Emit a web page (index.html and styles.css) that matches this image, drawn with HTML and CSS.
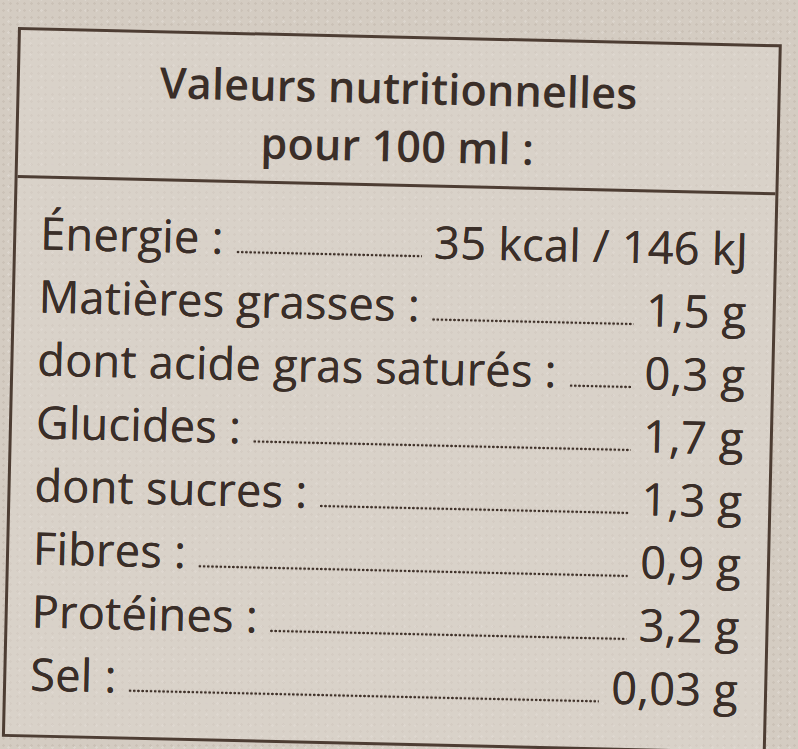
FILE: index.html
```html
<!DOCTYPE html>
<html lang="fr">
<head>
<meta charset="utf-8">
<title>Valeurs nutritionnelles</title>
<link rel="stylesheet" href="styles.css">
</head>
<body>
<div class="sheet">
  <section class="label">
    <header class="label-head">
      <div class="head-line">Valeurs nutritionnelles</div>
      <div class="head-line">pour 100 ml :</div>
    </header>
    <div class="label-body">
      <div class="row"><span class="name">Énergie :</span><span class="leader"></span><span class="val">35 kcal / 146 kJ</span></div>
      <div class="row"><span class="name">Matières grasses :</span><span class="leader"></span><span class="val">1,5 g</span></div>
      <div class="row"><span class="name">dont acide gras saturés :</span><span class="leader"></span><span class="val">0,3 g</span></div>
      <div class="row"><span class="name">Glucides :</span><span class="leader"></span><span class="val">1,7 g</span></div>
      <div class="row"><span class="name">dont sucres :</span><span class="leader"></span><span class="val">1,3 g</span></div>
      <div class="row"><span class="name">Fibres :</span><span class="leader"></span><span class="val">0,9 g</span></div>
      <div class="row"><span class="name">Protéines :</span><span class="leader"></span><span class="val">3,2 g</span></div>
      <div class="row"><span class="name">Sel :</span><span class="leader"></span><span class="val">0,03 g</span></div>
    </div>
  </section>
</div>
</body>
</html>
```
FILE: styles.css
```css
html, body {
  margin: 0;
  padding: 0;
}
body {
  width: 798px;
  height: 749px;
  overflow: hidden;
  background-color: #d4ccc2;
  background-image:
    radial-gradient(rgba(120, 100, 85, 0.10) 1px, transparent 1.5px),
    radial-gradient(rgba(255, 255, 255, 0.18) 1px, transparent 1.5px);
  background-size: 7px 7px, 11px 11px;
  background-position: 0 0, 3px 5px;
  font-family: "Open Sans", "Noto Sans", "DejaVu Sans", sans-serif;
  color: #3a2e28;
}
.sheet {
  padding: 27px 0 0 18px;
}
.label {
  width: 764px;
  box-sizing: border-box;
  border: 3px solid #4d3d33;
  transform: rotate(1.3deg);
  transform-origin: 0 0;
  background-color: rgba(225, 218, 210, 0.45);
}
.label-head {
  height: 148px;
  box-sizing: border-box;
  border-bottom: 3px solid #4d3d33;
  padding-top: 20px;
  text-align: center;
  font-weight: 600;
  font-size: 43px;
  line-height: 58px;
  letter-spacing: 0.2px;
}
.label-body {
  padding: 22px 26px 30px 24px;
}
.row {
  display: flex;
  align-items: baseline;
  height: 63px;
  font-size: 45px;
  line-height: 63px;
  letter-spacing: 0.3px;
}
.name {
  white-space: nowrap;
  text-shadow: 0 0 0.4px #3a2e28;
}
.val {
  white-space: nowrap;
  text-shadow: 0 0 0.4px #3a2e28;
}
.leader {
  flex: 1;
  margin: 0 12px 0 12px;
  height: 6px;
  background-image: radial-gradient(circle, #3f3129 1.2px, transparent 1.6px);
  background-size: 4.2px 4px;
  background-repeat: repeat-x;
  background-position: 0 100%;
}
```
